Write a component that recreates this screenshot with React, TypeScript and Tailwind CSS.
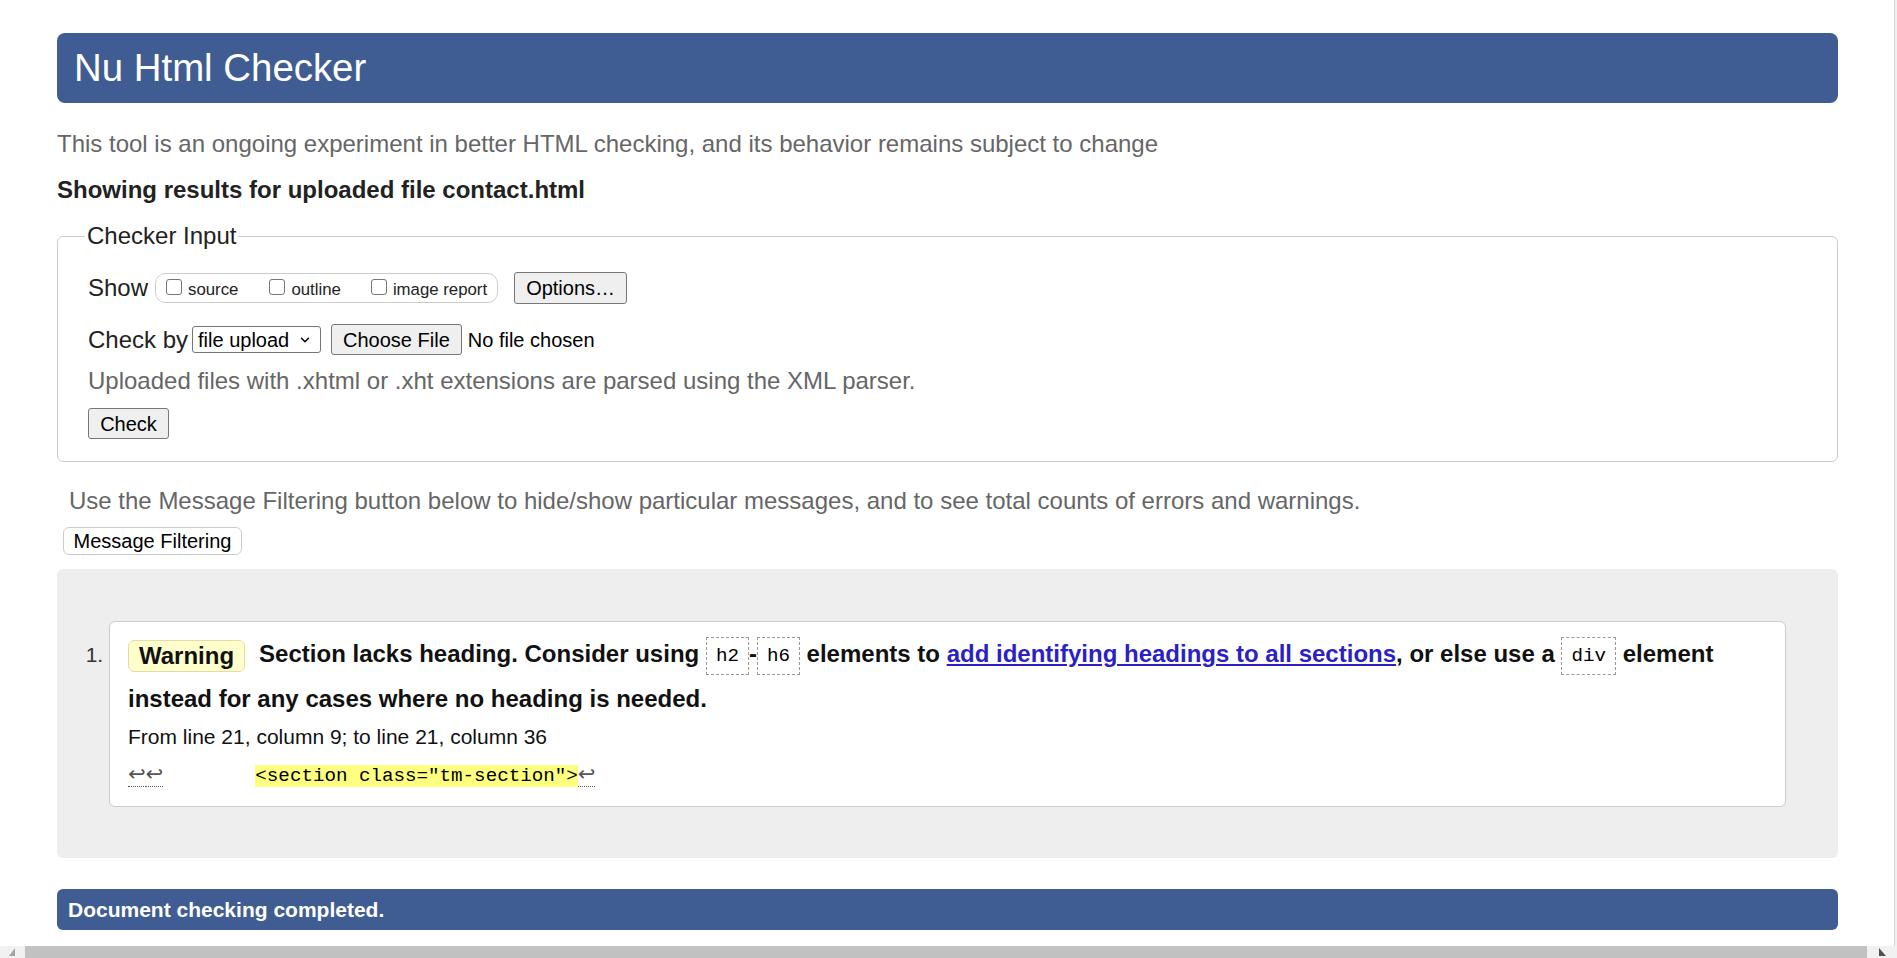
import { ChevronDown } from 'lucide-react'

function Checkbox({ label, className = '' }: { label: string; className?: string }) {
  return (
    <label className={`flex items-center ${className}`}>
      <span className="w-[16px] h-[16px] mb-[3px] rounded-[3px] border border-[#767676] bg-white" />
      <span className="ml-[6px] text-[16.8px] leading-[20px] mt-[4px] text-[#222]">{label}</span>
    </label>
  )
}

function Btn({ children, className = '' }: { children: React.ReactNode; className?: string }) {
  return (
    <span
      className={`inline-flex items-center justify-center px-[11px] bg-[#efefef] border border-[#767676] rounded-[3px] text-[20px] text-black ${className}`}
    >
      {children}
    </span>
  )
}

function Code({ children }: { children: React.ReactNode }) {
  return (
    <code className="inline-block align-middle px-[9px] leading-[36px] border border-dashed border-[#999] font-['Liberation_Mono',monospace] text-[19.2px] font-normal text-black">
      {children}
    </code>
  )
}

function Lf() {
  return (
    <span className="font-['DejaVu_Sans',sans-serif] text-[21px] leading-none text-[#555] border-b border-dotted border-[#555]">
      ↩
    </span>
  )
}

export default function App() {
  return (
    <div className="h-[958px] w-full overflow-hidden bg-white flex flex-col font-['Liberation_Sans',Arial,sans-serif] text-[#222]">
      <div className="flex flex-1 min-h-0">
        <div className="flex-1 pl-[57px] pr-[56px]">
          <h1 className="mt-[33px] h-[70px] rounded-[8px] bg-[#3f5d93] flex items-center pl-[17px] text-white text-[38.4px] font-normal">
            Nu Html Checker
          </h1>

          <p className="mt-[27px] text-[24px] leading-[28px] text-[#666]">
            This tool is an ongoing experiment in better HTML checking, and its behavior remains subject to change
          </p>

          <p className="mt-[18px] text-[24px] leading-[28px] font-bold text-[#222]">
            Showing results for uploaded file contact.html
          </p>

          <fieldset className="mt-[18px] border border-[#ccc] rounded-[6px] pl-[30px] pr-[20px] pt-[22px] pb-[22px]">
            <legend className="-ml-[3px] px-[2px] text-[24px] leading-[28px] text-[#222]">Checker Input</legend>

            <div className="flex items-center h-[32px]">
              <span className="text-[24px] leading-[28px]">Show</span>
              <div className="ml-[7px] h-[30px] flex items-center pl-[10px] pr-[10px] border border-[#ccc] rounded-[10px]">
                <Checkbox label="source" />
                <Checkbox label="outline" className="ml-[31px]" />
                <Checkbox label="image report" className="ml-[30px]" />
              </div>
              <Btn className="ml-[16px] h-[32px] w-[113px]">Options…</Btn>
            </div>

            <div className="flex items-center h-[31px] mt-[20px]">
              <span className="text-[24px] leading-[28px]">Check by</span>
              <span className="ml-[4px] h-[27px] w-[129px] flex items-center justify-between pl-[5px] pr-[8px] border border-[#767676] rounded-[3px] bg-white text-[20px] text-black">
                file upload
                <ChevronDown size={14} strokeWidth={2.5} />
              </span>
              <Btn className="ml-[10px] h-[31px]">Choose File</Btn>
              <span className="ml-[6px] text-[20px] text-black">No file chosen</span>
            </div>

            <p className="mt-[12px] text-[24px] leading-[28px] text-[#666]">
              Uploaded files with .xhtml or .xht extensions are parsed using the XML parser.
            </p>

            <div className="mt-[13px] flex">
              <Btn className="h-[31px] w-[81px]">Check</Btn>
            </div>
          </fieldset>

          <p className="mt-[25px] ml-[12px] text-[24px] leading-[28px] text-[#666]">
            Use the Message Filtering button below to hide/show particular messages, and to see total counts of errors and warnings.
          </p>

          <div className="mt-[12px] ml-[6px] flex">
            <span className="h-[28px] w-[179px] flex items-center justify-center bg-white border border-[#ccc] rounded-[6px] text-[20px] text-black">
              Message Filtering
            </span>
          </div>

          <div className="mt-[14px] bg-[#eee] rounded-[6px] px-[52px] pt-[52px] pb-[51px]">
            <ol className="list-decimal text-[21px] text-[#333]">
              <li>
                <div className="bg-white border border-[#ccc] rounded-[6px] pl-[18px] pr-[18px] pt-[9px] pb-[16px]">
                  <p className="text-[24px] leading-[45px] font-bold text-[#111]">
                    <span className="inline-block align-middle h-[32px] leading-[30px] px-[10px] mr-[14px] bg-[#ffffcc] border border-[#e2dca8] rounded-[6px]">
                      Warning
                    </span>
                    Section lacks heading. Consider using <Code>h2</Code>-<Code>h6</Code> elements to{' '}
                    <a href="#" className="text-[#2b1fc5] underline underline-offset-2">
                      add identifying headings to all sections
                    </a>
                    , or else use a <Code>div</Code> element instead for any cases where no heading is needed.
                  </p>
                  <p className="mt-[2px] text-[21px] leading-[28px] text-[#111]">
                    From line 21, column 9; to line 21, column 36
                  </p>
                  <p className="mt-[11px] h-[28px] leading-[28px] whitespace-pre font-['Liberation_Mono',monospace] text-[19.2px] text-black">
                    <Lf />
                    <Lf />
                    {'        '}
                    <mark className="bg-[#ffff80] text-black">{'<section class="tm-section">'}</mark>
                    <Lf />
                  </p>
                </div>
              </li>
            </ol>
          </div>

          <div className="mt-[31px] h-[41px] rounded-[6px] bg-[#3f5d93] flex items-center pl-[11px] text-white text-[21px] font-bold">
            Document checking completed.
          </div>
        </div>
        <div className="w-[3px] bg-[#f1f1f1] border-l border-[#d6d6d6]" />
      </div>

      <div className="h-[12px] flex bg-[#f1f1f1]">
        <div className="w-[25px] flex items-center justify-center">
          <svg width="7" height="8" viewBox="0 0 7 8">
            <path d="M6 0 L6 8 L0 8 Z" fill="#a3a3a3" />
          </svg>
        </div>
        <div className="flex-1 bg-[#c1c1c1]" />
        <div className="w-[30px] flex items-center justify-center">
          <svg width="7" height="8" viewBox="0 0 7 8">
            <path d="M0 0 L7 8 L0 8 Z" fill="#505050" />
          </svg>
        </div>
      </div>
    </div>
  )
}
